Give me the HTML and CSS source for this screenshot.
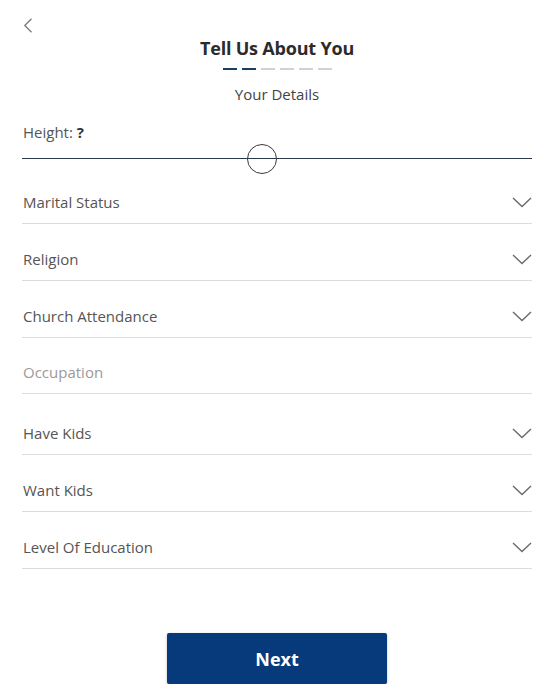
FILE: index.html
```html
<!DOCTYPE html>
<html>
<head>
<meta charset="utf-8">
<link rel="stylesheet" href="styles.css">
</head>
<body>
<div class="page">
  <div class="topbar">
    <svg class="back" width="10" height="15" viewBox="0 0 10 15"><path d="M8.5 0.8 L1.8 7.5 L8.5 14.2" fill="none" stroke="#7a7a7a" stroke-width="1.3"/></svg>
  </div>
  <h1 class="title">Tell Us About You</h1>
  <div class="steps">
    <span class="step on"></span><span class="step on"></span><span class="step"></span><span class="step"></span><span class="step"></span><span class="step"></span>
  </div>
  <div class="subtitle">Your Details</div>

  <div class="label">Height: <b>?</b></div>
  <div class="slider">
    <div class="track"></div>
    <div class="thumb"></div>
  </div>

  <div class="row"><span class="txt">Marital Status</span><svg class="chev" width="20" height="11" viewBox="0 0 20 11"><path d="M1 1 L10 9.5 L19 1" fill="none" stroke="#6a6a6a" stroke-width="1.4"/></svg></div>
  <div class="row"><span class="txt">Religion</span><svg class="chev" width="20" height="11" viewBox="0 0 20 11"><path d="M1 1 L10 9.5 L19 1" fill="none" stroke="#6a6a6a" stroke-width="1.4"/></svg></div>
  <div class="row"><span class="txt">Church Attendance</span><svg class="chev" width="20" height="11" viewBox="0 0 20 11"><path d="M1 1 L10 9.5 L19 1" fill="none" stroke="#6a6a6a" stroke-width="1.4"/></svg></div>
  <div class="row input"><span class="txt ph">Occupation</span></div>
  <div class="row kids"><span class="txt">Have Kids</span><svg class="chev" width="20" height="11" viewBox="0 0 20 11"><path d="M1 1 L10 9.5 L19 1" fill="none" stroke="#6a6a6a" stroke-width="1.4"/></svg></div>
  <div class="row"><span class="txt">Want Kids</span><svg class="chev" width="20" height="11" viewBox="0 0 20 11"><path d="M1 1 L10 9.5 L19 1" fill="none" stroke="#6a6a6a" stroke-width="1.4"/></svg></div>
  <div class="row"><span class="txt">Level Of Education</span><svg class="chev" width="20" height="11" viewBox="0 0 20 11"><path d="M1 1 L10 9.5 L19 1" fill="none" stroke="#6a6a6a" stroke-width="1.4"/></svg></div>

  <div class="actions">
    <button class="next">Next</button>
  </div>
</div>
</body>
</html>
```

FILE: styles.css
```css
* { box-sizing: border-box; }
html, body { margin: 0; padding: 0; background: #fff; }
body { font-family: "Open Sans", "Noto Sans", sans-serif; color: #555; }
.page { width: 556px; padding: 0 24px 0 22px; }
.topbar { height: 36px; padding-top: 18px; padding-left: 1px; }
.back { display: block; }
.title { margin: 0; font-size: 18px; line-height: 24px; font-weight: 700; color: #2b2b2b; text-align: center; letter-spacing: -0.2px; }
.steps { display: flex; justify-content: center; gap: 5px; margin-top: 8px; height: 2px; }
.step { width: 14px; height: 2px; background: #d2d2d2; }
.step.on { background: #1d3f5e; }
.subtitle { margin-top: 14px; font-size: 15px; line-height: 20px; text-align: center; color: #444; }
.label { margin-top: 18px; padding-left: 1px; font-size: 15px; line-height: 20px; color: #555; }
.label b { color: #333; }
.slider { position: relative; height: 25px; }
.track { position: absolute; left: 0; right: 0; top: 16px; height: 1px; background: #2a3a4a; }
.thumb { position: absolute; left: 225px; top: 2px; width: 30px; height: 30px; border: 1.5px solid #3a3a3a; border-radius: 50%; }
.row { display: flex; align-items: center; justify-content: space-between; padding: 25px 1px 11px 1px; border-bottom: 1px solid #dcdcdc; }
.row.input { padding-top: 24px; }
.row.kids { margin-top: 4px; }
.txt { font-size: 15px; line-height: 20px; color: #555; }
.txt.ph { color: #9a9a9a; }
.chev { display: block; margin-right: -1px; }
.actions { display: flex; justify-content: center; margin-top: 64px; }
.next { width: 220px; height: 51px; border: none; border-radius: 2px; background: #073a7a; color: #fff; font-family: "Open Sans", sans-serif; font-size: 18px; font-weight: 700; box-shadow: 0 1px 3px rgba(0,0,0,0.25); }
```
